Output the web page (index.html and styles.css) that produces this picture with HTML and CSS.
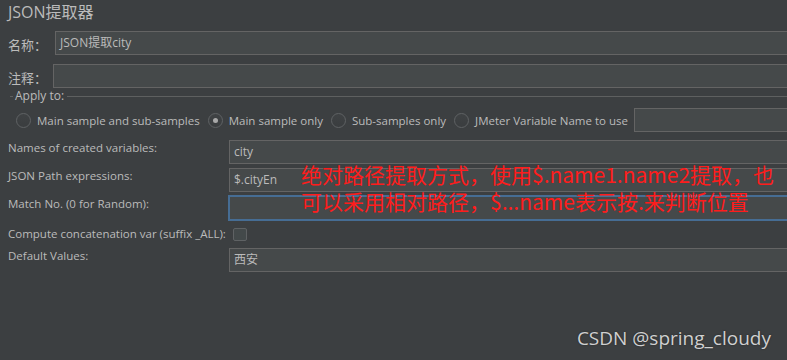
FILE: index.html
```html
<!DOCTYPE html>
<html>
<head>
<meta charset="utf-8">
<link rel="stylesheet" href="styles.css">
</head>
<body>
<div class="page">
  <div class="title">JSON提取器</div>
  <div class="top-row row-name">
    <span class="top-label">名称：</span>
    <div class="field field-name">JSON提取city</div>
  </div>
  <div class="top-row row-comment">
    <span class="top-label">注释：</span>
    <div class="field field-comment"></div>
  </div>
  <div class="apply-head">
    <span class="dash"></span>
    <span class="legend">Apply to:</span>
    <span class="rule"></span>
  </div>
  <div class="radios">
    <span class="radio"></span><span class="rtext">Main sample and sub-samples</span>
    <span class="radio checked"></span><span class="rtext">Main sample only</span>
    <span class="radio"></span><span class="rtext">Sub-samples only</span>
    <span class="radio"></span><span class="rtext">JMeter Variable Name to use</span>
    <div class="field field-var"></div>
  </div>
  <div class="params">
    <span class="plabel">Names of created variables:</span>
    <div class="field">city</div>
    <span class="plabel">JSON Path expressions:</span>
    <div class="field">$.cityEn</div>
    <span class="plabel">Match No. (0 for Random):</span>
    <div class="field focused"></div>
    <span class="plabel plabel-check">Compute concatenation var (suffix _ALL):</span>
    <div class="check-cell"><span class="checkbox"></span></div>
    <span class="plabel">Default Values:</span>
    <div class="field">西安</div>
  </div>
  <div class="note">绝对路径提取方式，使用$.name1.name2提取，也<br>可以采用相对路径，$...name表示按.来判断位置</div>
  <div class="watermark">CSDN @spring_cloudy</div>
</div>
</body>
</html>
```

FILE: styles.css
```css
html, body {
  margin: 0;
  padding: 0;
  background: #3c3f41;
  overflow: hidden;
}
.page {
  position: relative;
  width: 787px;
  height: 360px;
  overflow: hidden;
  color: #bbbbbb;
  font-family: "Open Sans", "Noto Sans CJK SC", sans-serif;
  font-size: 11.5px;
}
.title {
  height: 26px;
  line-height: 24px;
  padding-left: 8px;
  font-size: 16px;
  font-family: "Open Sans", "Noto Sans CJK SC", sans-serif;
}
.top-row {
  display: flex;
  align-items: center;
  height: 24px;
  padding-left: 8px;
}
.row-name { margin-top: 5px; }
.row-comment { margin-top: 9px; }
.top-label {
  font-size: 13px;
  line-height: 16px;
  margin-top: 3px;
  font-family: "Noto Sans CJK SC", sans-serif;
}
.field {
  box-sizing: border-box;
  height: 24px;
  background: #45494a;
  border: 1px solid #646464;
  padding: 0 4px;
  line-height: 22px;
  font-size: 12px;
  color: #bbbbbb;
  font-family: "Open Sans", "Noto Sans CJK SC", sans-serif;
  white-space: nowrap;
}
.top-row .field { flex: 1; margin-right: -20px; }
.field-name { margin-left: 8px; }
.field-comment { margin-left: 6px; }
.apply-head {
  display: flex;
  align-items: center;
  height: 14px;
  margin-top: 1px;
  padding-left: 10px;
}
.dash {
  width: 3px;
  height: 1px;
  background: #5e6060;
}
.legend {
  padding: 0 3px 0 2px;
  line-height: 14px;
  font-size: 12px;
}
.rule {
  flex: 1;
  height: 1px;
  background: #5e6060;
}
.radios {
  display: flex;
  align-items: center;
  height: 24px;
  margin-top: 5px;
  padding-left: 16px;
}
.radio {
  box-sizing: border-box;
  width: 15px;
  height: 15px;
  border-radius: 50%;
  border: 1px solid #5f6264;
  background: linear-gradient(#3f4244, #3a3d3f);
  margin-right: 6px;
  flex: none;
  display: flex;
  align-items: center;
  justify-content: center;
}
.radio.checked::after {
  content: "";
  width: 5px;
  height: 5px;
  border-radius: 50%;
  background: #a9a9a9;
}
.rtext {
  margin-right: 8px;
  white-space: nowrap;
}
.field-var {
  flex: 1;
  margin-left: -2px;
  margin-right: -20px;
}
.params {
  display: grid;
  grid-template-columns: 221px 1fr;
  grid-template-rows: 24px 24px 24px 20px 24px;
  row-gap: 4px;
  margin-top: 8px;
  padding-left: 8px;
  margin-right: -20px;
}
.plabel {
  line-height: 16px;
  white-space: nowrap;
}
.plabel-check {
  align-self: center;
}
.check-cell {
  display: flex;
  align-items: center;
  padding-left: 4px;
}
.checkbox {
  box-sizing: border-box;
  width: 14px;
  height: 13px;
  border: 1px solid #5f6264;
  border-radius: 2px;
  background: #43494a;
}
.focused {
  border: 2px solid #466d94;
  margin-left: -1px;
  margin-top: -1px;
  height: 26px;
}
.note {
  position: absolute;
  left: 301px;
  top: 161px;
  color: #ff1c1c;
  font-size: 21px;
  line-height: 27px;
  font-family: "Noto Sans CJK SC", sans-serif;
  white-space: nowrap;
}
.watermark {
  position: absolute;
  right: 16px;
  top: 325px;
  color: #d0d0d0;
  font-size: 19px;
  font-family: "Open Sans", sans-serif;
  text-shadow: 0 0 2px rgba(0,0,0,0.4);
}
```
